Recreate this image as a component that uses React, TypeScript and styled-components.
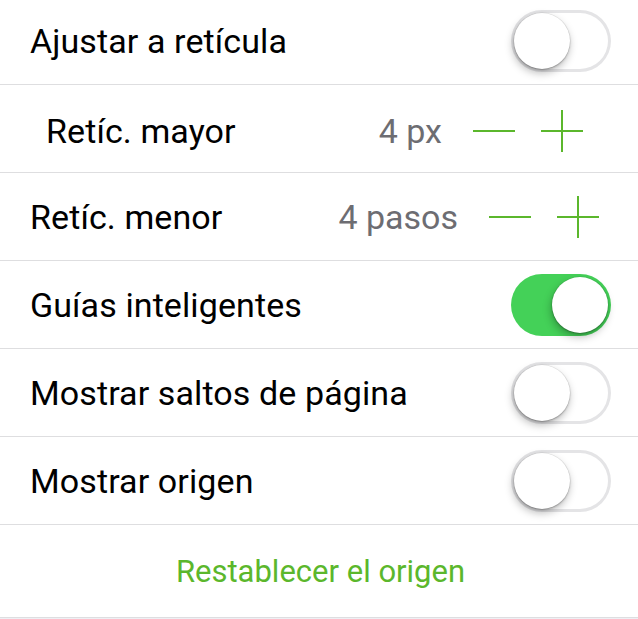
import styled, { createGlobalStyle } from 'styled-components';
import { useState } from 'react';

const GlobalStyle = createGlobalStyle`
  html, body {
    margin: 0;
    padding: 0;
    background: #efeff4;
  }
  body {
    font-family: Roboto, "Liberation Sans", sans-serif;
    -webkit-font-smoothing: antialiased;
  }
`;

const accent = '#5bb72c';

const List = styled.div`
  width: 638px;
  margin-top: -3px;
  background: #ffffff;
  display: flex;
  flex-direction: column;
`;

const Row = styled.div<{ $indent?: boolean; $tall?: boolean }>`
  box-sizing: border-box;
  height: ${p => (p.$tall ? '93px' : '88px')};
  border-bottom: 1px solid #dedee0;
  display: flex;
  align-items: center;
  padding: ${p => (p.$indent ? '4px 43px 0 46px' : '0 27px 0 30px')};
`;

const Label = styled.span`
  flex: 1;
  font-size: 34px;
  color: #000000;
  letter-spacing: 0.1px;
`;

const Value = styled.span`
  font-size: 34px;
  color: #6d6d72;
  margin-right: 31px;
`;

const Stepper = styled.div`
  display: flex;
  align-items: center;
  gap: 26px;
  margin-right: 12px;
`;

const StepButton = styled.button`
  width: 42px;
  height: 42px;
  padding: 0;
  border: 0;
  background: none;
  cursor: pointer;
  display: block;

  svg {
    display: block;
  }
`;

const Track = styled.button<{ $on: boolean }>`
  box-sizing: border-box;
  width: 100px;
  height: 62px;
  border: 0;
  border-radius: 31px;
  padding: 3px;
  display: flex;
  align-items: center;
  justify-content: ${p => (p.$on ? 'flex-end' : 'flex-start')};
  background: ${p => (p.$on ? '#44d158' : '#ffffff')};
  box-shadow: ${p => (p.$on ? 'none' : 'inset 0 0 0 3px #e4e4e6')};
  cursor: pointer;
`;

const Knob = styled.span`
  width: 56px;
  height: 56px;
  border-radius: 50%;
  background: #ffffff;
  box-shadow: -1px 4px 8px rgba(0, 0, 0, 0.28), 0 1px 2px rgba(0, 0, 0, 0.25),
    0 0 0 0.5px rgba(0, 0, 0, 0.08);
`;

const ActionRow = styled(Row)`
  justify-content: center;
`;

const Action = styled.button`
  border: 0;
  background: none;
  padding: 0;
  font-family: inherit;
  font-size: 31px;
  color: ${accent};
  cursor: pointer;
`;

function Switch({ on, onToggle }: { on: boolean; onToggle: () => void }) {
  return (
    <Track $on={on} onClick={onToggle}>
      <Knob />
    </Track>
  );
}

function Minus() {
  return (
    <svg width="42" height="42" viewBox="0 0 42 42">
      <path d="M0 21H42" stroke={accent} strokeWidth="2" />
    </svg>
  );
}

function Plus() {
  return (
    <svg width="42" height="42" viewBox="0 0 42 42">
      <path d="M0 21H42M21 0V42" stroke={accent} strokeWidth="2" />
    </svg>
  );
}

export default function App() {
  const [snap, setSnap] = useState(false);
  const [guides, setGuides] = useState(true);
  const [breaks, setBreaks] = useState(false);
  const [origin, setOrigin] = useState(false);
  const [major, setMajor] = useState(4);
  const [minor, setMinor] = useState(4);

  return (
    <>
      <GlobalStyle />
      <List>
        <Row>
          <Label>Ajustar a retícula</Label>
          <Switch on={snap} onToggle={() => setSnap(!snap)} />
        </Row>
        <Row $indent>
          <Label>Retíc. mayor</Label>
          <Value>{major} px</Value>
          <Stepper>
            <StepButton onClick={() => setMajor(Math.max(1, major - 1))}><Minus /></StepButton>
            <StepButton onClick={() => setMajor(major + 1)}><Plus /></StepButton>
          </Stepper>
        </Row>
        <Row>
          <Label>Retíc. menor</Label>
          <Value>{minor} pasos</Value>
          <Stepper>
            <StepButton onClick={() => setMinor(Math.max(1, minor - 1))}><Minus /></StepButton>
            <StepButton onClick={() => setMinor(minor + 1)}><Plus /></StepButton>
          </Stepper>
        </Row>
        <Row>
          <Label>Guías inteligentes</Label>
          <Switch on={guides} onToggle={() => setGuides(!guides)} />
        </Row>
        <Row>
          <Label>Mostrar saltos de página</Label>
          <Switch on={breaks} onToggle={() => setBreaks(!breaks)} />
        </Row>
        <Row>
          <Label>Mostrar origen</Label>
          <Switch on={origin} onToggle={() => setOrigin(!origin)} />
        </Row>
        <ActionRow $tall>
          <Action>Restablecer el origen</Action>
        </ActionRow>
      </List>
    </>
  );
}
